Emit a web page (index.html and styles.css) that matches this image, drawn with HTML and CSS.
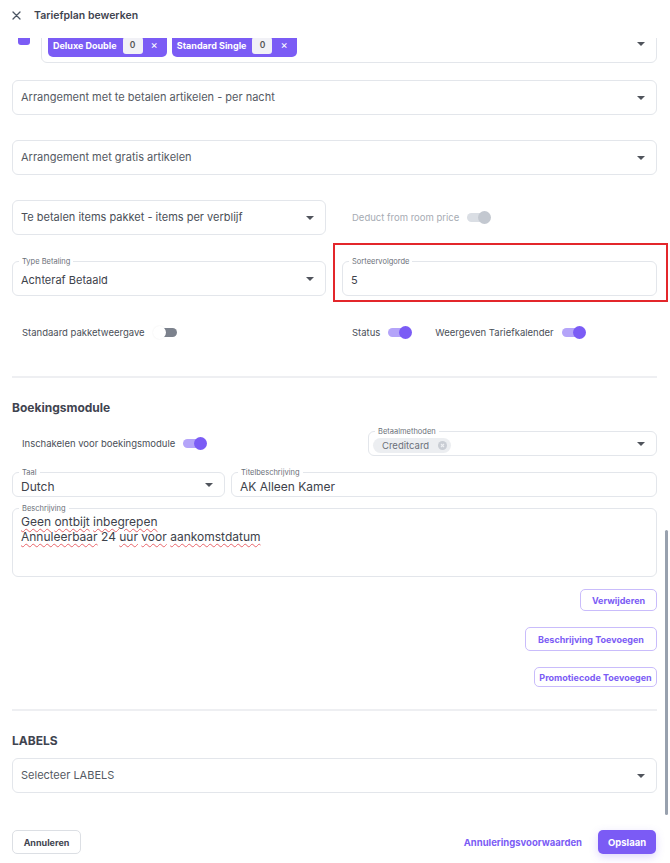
FILE: index.html
```html
<!DOCTYPE html>
<html lang="nl">
<head>
<meta charset="utf-8">
<title>Tariefplan bewerken</title>
<link rel="stylesheet" href="styles.css">
</head>
<body>
<div class="modal">
  <header class="modal-head">
    <svg class="close" width="9" height="9" viewBox="0 0 9 9"><path d="M1 1L8 8M8 1L1 8" stroke="#4b5563" stroke-width="1.3" stroke-linecap="round"/></svg>
    <h1>Tariefplan bewerken</h1>
  </header>

  <div class="modal-body">
    <div class="content">

      <div class="rooms-row">
        <span class="check"></span>
        <div class="field multi">
          <div class="chips">
            <span class="chip">Deluxe Double <span class="qty">0</span><span class="chip-x">×</span></span>
            <span class="chip">Standard Single <span class="qty">0</span><span class="chip-x">×</span></span>
          </div>
          <span class="caret"></span>
        </div>
      </div>

      <div class="field select tall gap-17"><span class="placeholder">Arrangement met te betalen artikelen - per nacht</span><span class="caret"></span></div>
      <div class="field select tall gap-25"><span class="placeholder">Arrangement met gratis artikelen</span><span class="caret"></span></div>

      <div class="grid2 gap-25">
        <div class="field select tall"><span class="placeholder dark">Te betalen items pakket - items per verblijf</span><span class="caret"></span></div>
        <div class="toggle-line disabled">
          <span>Deduct from room price</span>
          <span class="toggle on grey"><i></i></span>
        </div>
      </div>

      <div class="grid2 gap-26">
        <div class="field select tall labelled">
          <span class="legend">Type Betaling</span>
          <span class="value">Achteraf Betaald</span><span class="caret"></span>
        </div>
        <div class="field tall labelled flagged">
          <span class="legend">Sorteervolgorde</span>
          <span class="value">5</span>
        </div>
      </div>

      <div class="grid2 toggles-row">
        <div class="toggle-line">
          <span>Standaard pakketweergave</span>
          <span class="toggle off"><i></i></span>
        </div>
        <div class="toggle-line">
          <span>Status</span>
          <span class="toggle on"><i></i></span>
          <span class="spaced">Weergeven Tariefkalender</span>
          <span class="toggle on"><i></i></span>
        </div>
      </div>

      <hr class="divider first">

      <h2 class="section-title booking">Boekingsmodule</h2>

      <div class="grid-book">
        <div class="toggle-line">
          <span>Inschakelen voor boekingsmodule</span>
          <span class="toggle on"><i></i></span>
        </div>
        <div class="field select short labelled">
          <span class="legend">Betaalmethoden</span>
          <span class="pill">Creditcard <svg width="9" height="9" viewBox="0 0 9 9"><circle cx="4.5" cy="4.5" r="4.5" fill="#c9cdd4"/><path d="M3 3L6 6M6 3L3 6" stroke="#eef0f3" stroke-width="1.1"/></svg></span>
          <span class="caret"></span>
        </div>
      </div>

      <div class="grid-lang">
        <div class="field select short labelled">
          <span class="legend">Taal</span>
          <span class="value big">Dutch</span><span class="caret"></span>
        </div>
        <div class="field short labelled">
          <span class="legend">Titelbeschrijving</span>
          <span class="value big">AK Alleen Kamer</span>
        </div>
      </div>

      <div class="field area labelled">
        <span class="legend">Beschrijving</span>
        <p class="area-text"><span class="typo">Geen</span> <span class="typo">ontbijt</span> <span class="typo">inbegrepen</span><br><span class="typo">Annuleerbaar</span> 24 <span class="typo">uur</span> <span class="typo">voor</span> <span class="typo">aankomstdatum</span></p>
      </div>

      <div class="actions">
        <button class="btn outline b1">Verwijderen</button>
        <button class="btn outline b2">Beschrijving Toevoegen</button>
        <button class="btn outline b3">Promotiecode Toevoegen</button>
      </div>

      <hr class="divider second">

      <h2 class="section-title labels">LABELS</h2>
      <div class="field select tall labels-field"><span class="placeholder">Selecteer LABELS</span><span class="caret"></span></div>
    </div>
  </div>

  <footer class="modal-foot">
    <button class="btn plain">Annuleren</button>
    <div class="foot-right">
      <a class="link">Annuleringsvoorwaarden</a>
      <button class="btn primary">Opslaan</button>
    </div>
  </footer>

  <div class="scroll-thumb"></div>
</div>
</body>
</html>
```

FILE: styles.css
```css
* { box-sizing: border-box; }

html, body {
  margin: 0;
  padding: 0;
  background: #ffffff;
}

body {
  font-family: "Inter", "Open Sans", sans-serif;
  color: #3f4450;
  width: 670px;
  height: 863px;
  overflow: hidden;
}

.modal {
  position: relative;
  width: 670px;
  height: 863px;
  display: flex;
  flex-direction: column;
}

/* header */
.modal-head {
  height: 38px;
  flex: none;
  display: flex;
  align-items: flex-start;
  padding: 11px 0 0 12px;
  gap: 13px;
  background: #fff;
  position: relative;
  z-index: 2;
}
.modal-head .close { margin-top: 0; }
.modal-head h1 {
  margin: 0;
  font-size: 10.5px;
  line-height: 10px;
  font-weight: 600;
  color: #3f4450;
}

/* scrolling body */
.modal-body {
  height: 777px;
  flex: none;
  overflow: hidden;
}
.content {
  margin-top: -11px;
  padding: 0 13px 0 12px;
}

.gap-17 { margin-top: 17px; }
.gap-25 { margin-top: 25px; }
.gap-26 { margin-top: 26px; }

/* generic outlined field */
.field {
  position: relative;
  border: 1px solid #e3e6eb;
  border-radius: 6px;
  background: #fff;
  display: flex;
  align-items: center;
  padding: 0 8px;
}
.field.tall { height: 35px; }
.field.short { height: 25px; }
.field.select { padding-right: 26px; }

.placeholder {
  font-size: 11px;
  color: #555a63;
  margin-top: -1px;
}
.placeholder.dark { color: #4a4f58; }
.value {
  font-size: 11px;
  color: #3d424b;
}
.value.big { font-size: 12px; }

.caret {
  position: absolute;
  right: 11px;
  top: 50%;
  margin-top: -2px;
  width: 0;
  height: 0;
  border-left: 4px solid transparent;
  border-right: 4px solid transparent;
  border-top: 4px solid #50545c;
}

.legend {
  position: absolute;
  left: 6px;
  top: -5px;
  padding: 0 3px;
  background: #fff;
  font-size: 7.5px;
  line-height: 9px;
  color: #6b7079;
}
.labelled .value { margin-top: 3px; }

/* rooms multi select */
.rooms-row {
  display: flex;
  align-items: flex-start;
  gap: 11px;
  padding-left: 6px;
}
.check {
  width: 12px;
  height: 12px;
  border-radius: 3px;
  background: #7b5cf5;
  margin-top: 6px;
  flex: none;
}
.field.multi {
  flex: 1;
  padding: 5px 26px 5px 6px;
  align-items: flex-start;
}
.field.multi .caret { top: 16px; }
.chips { display: flex; gap: 5px; }
.chip {
  height: 24px;
  display: inline-flex;
  align-items: center;
  background: #7b5cf5;
  color: #fff;
  border-radius: 5px;
  padding: 0 9px 0 5px;
  font-size: 9px;
  font-weight: 700;
  white-space: nowrap;
}
.qty {
  display: inline-flex;
  align-items: center;
  justify-content: center;
  width: 20px;
  height: 17px;
  margin-left: 6px;
  background: #f1f1f6;
  color: #555;
  border-radius: 3px;
  font-size: 8.5px;
  font-weight: 600;
}
.chip-x {
  margin-left: 8px;
  font-size: 11px;
  font-weight: 400;
}

/* two-column rows */
.grid2 {
  display: grid;
  grid-template-columns: 314px 1fr;
  column-gap: 16px;
  align-items: center;
}

.toggle-line {
  display: flex;
  align-items: center;
  padding-left: 10px;
  font-size: 9.5px;
  color: #4a4f58;
  gap: 8px;
}
.toggle-line.disabled { color: #a6abb3; }
.toggle-line .spaced { margin-left: 15px; }

.toggles-row { margin-top: 30px; }

.toggle {
  position: relative;
  display: inline-block;
  width: 24px;
  height: 13px;
  flex: none;
}
.toggle::before {
  content: "";
  position: absolute;
  left: 0;
  right: 2px;
  top: 2px;
  height: 9px;
  border-radius: 5px;
  background: #b4a4f9;
}
.toggle i {
  position: absolute;
  top: 0;
  width: 13px;
  height: 13px;
  border-radius: 50%;
  background: #7b5cf5;
}
.toggle.on i { right: 0; }
.toggle.grey::before { background: #dadee4; }
.toggle.grey i { background: #c3c8d0; }
.toggle.off::before { background: #7c828d; left: 3px; right: 0; }
.toggle.off i {
  left: 0;
  background: #fff;
  box-shadow: 0 0 2px rgba(0, 0, 0, 0.08);
}

/* highlighted sort order field */
.flagged::after {
  content: "";
  position: absolute;
  left: -10px;
  right: -12px;
  top: -19px;
  bottom: -7px;
  border: 2px solid #e3262b;
  pointer-events: none;
}

.divider {
  border: 0;
  height: 2px;
  background: #eeeff2;
  margin: 0;
}
.divider.first { margin-top: 37px; }
.divider.second { margin-top: 22px; }

.section-title {
  margin: 0;
  font-size: 12px;
  line-height: 16px;
  font-weight: 700;
  color: #3f4450;
}
.section-title.booking { margin-top: 22px; }
.section-title.labels { margin-top: 22px; font-size: 12px; }

.grid-book {
  display: grid;
  grid-template-columns: 1fr 289px;
  column-gap: 16px;
  align-items: center;
  margin-top: 15px;
}
.grid-book .field { padding-left: 4px; }
.pill {
  display: inline-flex;
  align-items: center;
  gap: 9px;
  margin-top: 4px;
  height: 15px;
  padding: 0 4px 0 9px;
  border-radius: 8px;
  background: #eceef1;
  font-size: 9.5px;
  color: #6b7079;
}

.grid-lang {
  display: grid;
  grid-template-columns: 213px 1fr;
  column-gap: 6px;
  margin-top: 16px;
}

.field.area {
  height: 69px;
  margin-top: 11px;
  align-items: flex-start;
}
.area-text {
  margin: 5px 0 0;
  font-size: 12px;
  line-height: 15px;
  color: #3d424b;
}
.typo {
  text-decoration: underline wavy #e8646a;
  text-decoration-thickness: 1px;
  text-underline-offset: 2px;
}

/* buttons */
.btn {
  font-family: inherit;
  font-weight: 700;
  font-size: 9px;
  border-radius: 5px;
  cursor: pointer;
  background: #fff;
  padding: 0;
  white-space: nowrap;
}
.actions {
  display: flex;
  flex-direction: column;
  align-items: flex-end;
  margin-top: 12px;
}
.btn.outline {
  border: 1px solid #c9bcfb;
  color: #7b5cf5;
}
.b1 { width: 77px; height: 22px; }
.b2 { width: 132px; height: 24px; margin-top: 16px; }
.b3 { width: 123px; height: 20px; margin-top: 16px; }

.labels-field { margin-top: 9px; }

/* footer */
.modal-foot {
  flex: none;
  height: 48px;
  display: flex;
  justify-content: space-between;
  align-items: flex-start;
  padding: 15px 14px 0 12px;
}
.btn.plain {
  width: 69px;
  height: 24px;
  border: 1px solid #dcdfe4;
  color: #3f4450;
}
.foot-right {
  display: flex;
  align-items: center;
  gap: 16px;
}
.link {
  font-size: 9.5px;
  font-weight: 700;
  color: #7b5cf5;
}
.btn.primary {
  width: 58px;
  height: 24px;
  border: 0;
  background: #7b5bf5;
  color: #fff;
  font-size: 9.5px;
  box-shadow: 0 3px 8px rgba(123, 91, 245, 0.25);
}

.scroll-thumb {
  position: absolute;
  left: 665px;
  top: 530px;
  width: 3px;
  height: 285px;
  border-radius: 2px;
  background: #98a1ae;
}
```
